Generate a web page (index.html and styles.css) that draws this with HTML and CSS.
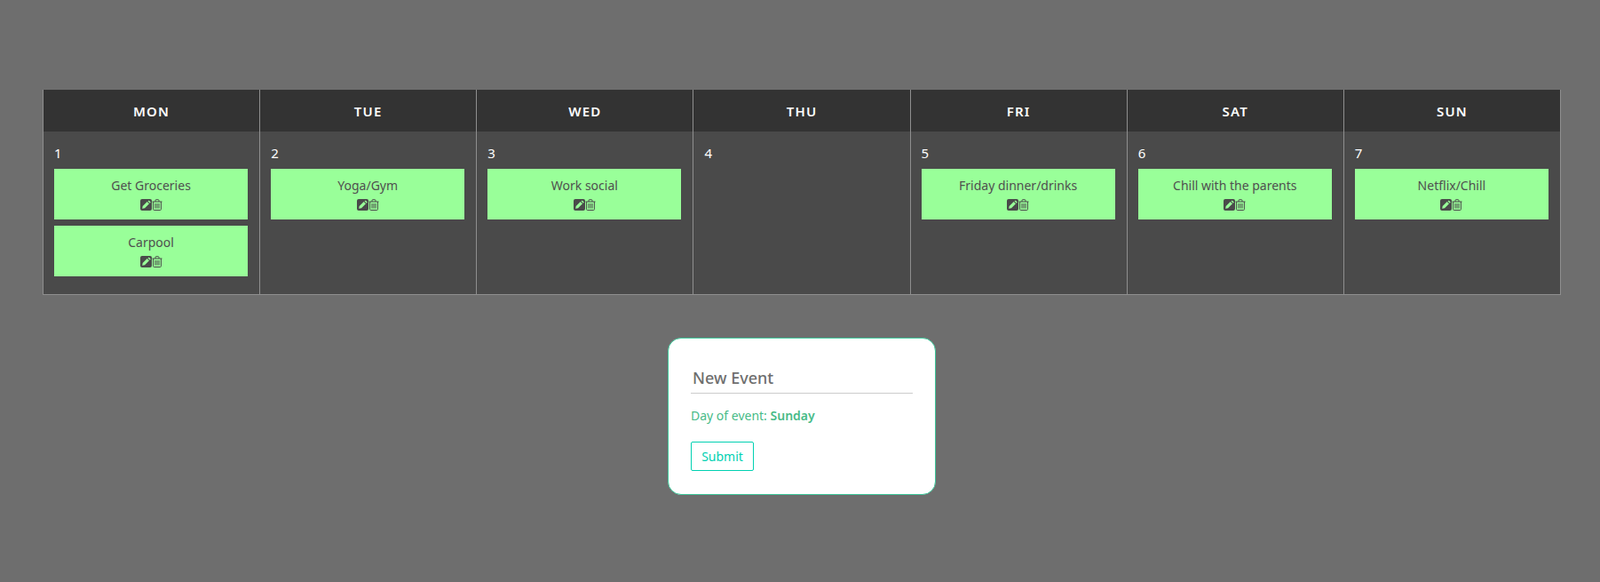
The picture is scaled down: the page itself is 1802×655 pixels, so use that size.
FILE: index.html
```html
<!DOCTYPE html>
<html lang="en">
<head>
  <meta charset="UTF-8" />
  <title>Weekly Calendar</title>
  <link rel="stylesheet" href="styles.css">
</head>
<body>
  <svg class="icon-defs" width="0" height="0">
    <symbol id="icon-edit" viewBox="0 0 13 13">
      <rect width="13" height="13" rx="2" fill="#4a4a4a"/>
      <path d="M2.2 10.8l.5-2.8 5-5 2.3 2.3-5 5zM8.6 2.4l.6-.6q.4-.3.8 0l1.5 1.5q.3.4 0 .8l-.6.6z" fill="#99ff99"/>
    </symbol>
    <symbol id="icon-trash" viewBox="0 0 12 13">
      <path d="M.5 3h11M4 3V1.6q0-.9.9-.9h2.2q.9 0 .9.9V3M1.6 3v8.6q0 .9.9.9h7q.9 0 .9-.9V3" fill="none" stroke="#4a4a4a"/>
      <path d="M4 5v5.6M6 5v5.6M8 5v5.6" fill="none" stroke="#4a4a4a"/>
    </symbol>
  </svg>

  <div class="calendar">
    <div class="day">
      <div class="day-name">MON</div>
      <div class="day-body">
        <p class="day-num">1</p>
        <div class="event">
          <p>Get Groceries</p>
          <div class="event-icons">
            <svg class="edit"><use href="#icon-edit"/></svg><svg class="trash"><use href="#icon-trash"/></svg>
          </div>
        </div>
        <div class="event">
          <p>Carpool</p>
          <div class="event-icons">
            <svg class="edit"><use href="#icon-edit"/></svg><svg class="trash"><use href="#icon-trash"/></svg>
          </div>
        </div>
      </div>
    </div>
    <div class="day">
      <div class="day-name">TUE</div>
      <div class="day-body">
        <p class="day-num">2</p>
        <div class="event">
          <p>Yoga/Gym</p>
          <div class="event-icons">
            <svg class="edit"><use href="#icon-edit"/></svg><svg class="trash"><use href="#icon-trash"/></svg>
          </div>
        </div>
      </div>
    </div>
    <div class="day">
      <div class="day-name">WED</div>
      <div class="day-body">
        <p class="day-num">3</p>
        <div class="event">
          <p>Work social</p>
          <div class="event-icons">
            <svg class="edit"><use href="#icon-edit"/></svg><svg class="trash"><use href="#icon-trash"/></svg>
          </div>
        </div>
      </div>
    </div>
    <div class="day">
      <div class="day-name">THU</div>
      <div class="day-body">
        <p class="day-num">4</p>
      </div>
    </div>
    <div class="day">
      <div class="day-name">FRI</div>
      <div class="day-body">
        <p class="day-num">5</p>
        <div class="event">
          <p>Friday dinner/drinks</p>
          <div class="event-icons">
            <svg class="edit"><use href="#icon-edit"/></svg><svg class="trash"><use href="#icon-trash"/></svg>
          </div>
        </div>
      </div>
    </div>
    <div class="day">
      <div class="day-name">SAT</div>
      <div class="day-body">
        <p class="day-num">6</p>
        <div class="event">
          <p>Chill with the parents</p>
          <div class="event-icons">
            <svg class="edit"><use href="#icon-edit"/></svg><svg class="trash"><use href="#icon-trash"/></svg>
          </div>
        </div>
      </div>
    </div>
    <div class="day">
      <div class="day-name">SUN</div>
      <div class="day-body">
        <p class="day-num">7</p>
        <div class="event">
          <p>Netflix/Chill</p>
          <div class="event-icons">
            <svg class="edit"><use href="#icon-edit"/></svg><svg class="trash"><use href="#icon-trash"/></svg>
          </div>
        </div>
      </div>
    </div>
  </div>

  <form class="event-form">
    <input class="event-input" type="text" placeholder="New Event" />
    <p class="event-day">Day of event: <strong>Sunday</strong></p>
    <button class="submit-btn" type="button">Submit</button>
  </form>
</body>
</html>
```

FILE: styles.css
```css
* {
  box-sizing: border-box;
}
html, body {
  height: 100%;
}
body {
  margin: 0;
  padding: 101px 44px 0 48px;
  background-color: #6e6e6e;
  font-family: "Noto Sans", "Open Sans", sans-serif;
  overflow: hidden;
}
.icon-defs {
  position: absolute;
}
.calendar {
  display: grid;
  grid-template-columns: repeat(7, 1fr);
  border-right: 1px solid #8f8f8f;
  border-bottom: 1px solid #8f8f8f;
  height: 231px;
}
.day {
  display: flex;
  flex-direction: column;
  border-left: 1px solid #8f8f8f;
  min-width: 0;
}
.day-name {
  height: 47px;
  line-height: 49px;
  background-color: #333333;
  color: #ffffff;
  text-align: center;
  font-size: 15px;
  font-weight: 600;
  letter-spacing: 1.2px;
}
.day-body {
  flex: 1;
  background-color: #4a4a4a;
  padding: 13px 13px 0 12px;
}
.day-num {
  margin: 0 0 7px;
  color: #ffffff;
  font-size: 15px;
  line-height: 22px;
}
.event {
  height: 57px;
  margin-bottom: 7px;
  padding-top: 9px;
  background-color: #99ff99;
  color: #4f4f4f;
  text-align: center;
}
.event p {
  margin: 0;
  font-size: 14px;
  line-height: 20px;
}
.event-icons {
  display: flex;
  justify-content: center;
  margin-top: 5px;
  height: 13px;
}
.edit {
  width: 13px;
  height: 13px;
}
.trash {
  width: 12px;
  height: 13px;
}
.event-form {
  width: 302px;
  height: 177px;
  margin: 48px auto 0;
  padding: 29px 25px 0;
  background-color: #ffffff;
  border: 1px solid #3dc79a;
  border-radius: 15px;
}
.event-input {
  display: block;
  width: 250px;
  height: 33px;
  padding: 0 2px 2px;
  border: none;
  border-bottom: 1px solid #cccccc;
  outline: none;
  font-family: inherit;
  font-size: 18px;
  font-weight: 500;
  color: #6e6e6e;
}
.event-input::placeholder {
  color: #6e6e6e;
  opacity: 1;
}
.event-day {
  margin: 15px 0 0;
  color: #48bb88;
  font-size: 14px;
  line-height: 20px;
}
.event-day strong {
  font-weight: 600;
}
.submit-btn {
  display: block;
  margin-top: 19px;
  width: 71px;
  height: 33px;
  padding: 0;
  background-color: #ffffff;
  border: 1px solid #00d1b2;
  border-radius: 2px;
  color: #00d1b2;
  font-family: inherit;
  font-size: 14px;
}
```
